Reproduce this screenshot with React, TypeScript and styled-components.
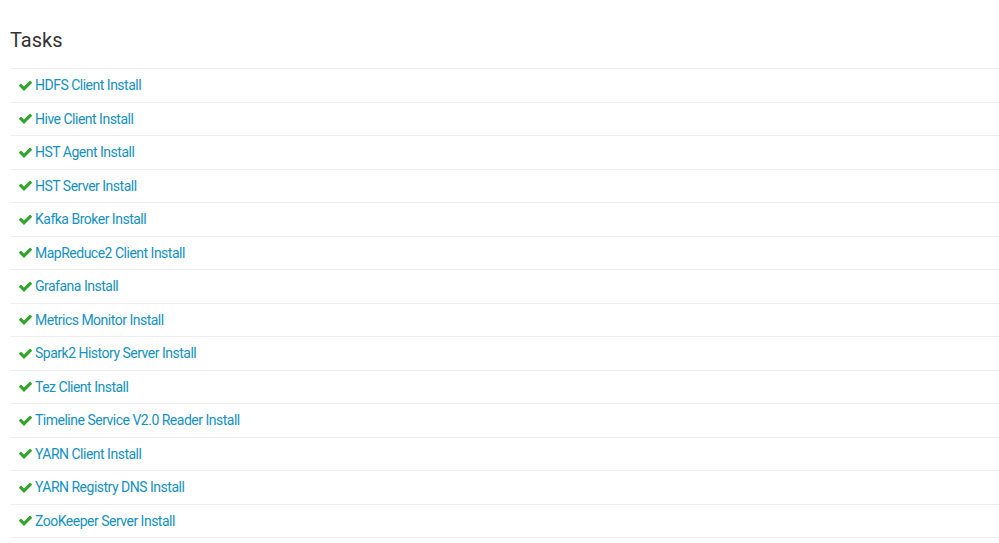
import React from 'react';
import styled, { createGlobalStyle } from 'styled-components';

const GlobalStyle = createGlobalStyle`
  body {
    margin: 0;
    background: #fff;
    font-family: Roboto, "Liberation Sans", Arial, sans-serif;
  }
`;

const Page = styled.div`
  padding: 27px 0 0 10px;
`;

const Title = styled.h3`
  margin: 0 0 15px;
  font-size: 20px;
  font-weight: 400;
  line-height: 26px;
  color: #333;
`;

const TaskList = styled.ul`
  list-style: none;
  margin: 0;
  padding: 0;
  border-top: 1px solid #eee;
`;

const TaskRow = styled.li`
  display: flex;
  align-items: center;
  height: 32.5px;
  padding-left: 8px;
  border-bottom: 1px solid #eee;
`;

const CheckSvg = styled.svg`
  color: #31a52a;
  width: 15px;
  height: 15px;
  margin-right: 2px;
  flex: none;
`;

const TaskLink = styled.a`
  color: #1491c1;
  font-size: 14px;
  letter-spacing: -0.5px;
  text-decoration: none;
  cursor: pointer;
`;

// font awesome 4 style check
const CheckIcon = () => (
  <CheckSvg viewBox="0 0 1792 1792">
    <path
      fill="currentColor"
      d="M1671 566q0 40-28 68l-724 724-136 136q-28 28-68 28t-68-28l-136-136-362-362q-28-28-28-68t28-68l136-136q28-28 68-28t68 28l294 295 656-657q28-28 68-28t68 28l136 136q28 28 28 68z"
    />
  </CheckSvg>
);

const tasks = [
  'HDFS Client Install',
  'Hive Client Install',
  'HST Agent Install',
  'HST Server Install',
  'Kafka Broker Install',
  'MapReduce2 Client Install',
  'Grafana Install',
  'Metrics Monitor Install',
  'Spark2 History Server Install',
  'Tez Client Install',
  'Timeline Service V2.0 Reader Install',
  'YARN Client Install',
  'YARN Registry DNS Install',
  'ZooKeeper Server Install',
];

export default function App() {
  return (
    <>
      <GlobalStyle />
      <Page>
        <Title>Tasks</Title>
        <TaskList>
          {tasks.map((t) => (
            <TaskRow key={t}>
              <CheckIcon />
              <TaskLink>{t}</TaskLink>
            </TaskRow>
          ))}
        </TaskList>
      </Page>
    </>
  );
}
